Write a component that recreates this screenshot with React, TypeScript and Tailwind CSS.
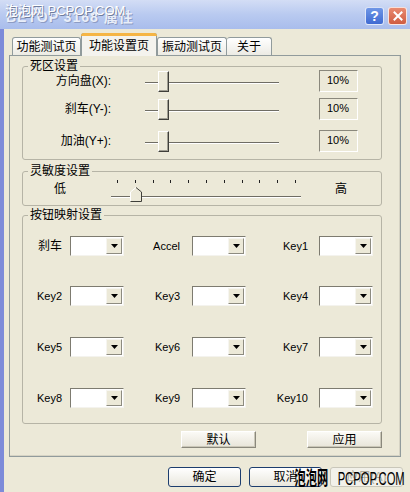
import React from "react";

const FONT = "font-['Liberation_Sans','Noto_Sans_CJK_SC',sans-serif]";

function SliderThumb() {
  return (
    <div className="absolute left-[13px] top-[1px] h-[21px] w-[11px] border border-t-white border-l-white border-r-[#3f3f3a] border-b-[#3f3f3a] bg-[#ece9d8] shadow-[inset_-1px_-1px_0_#a09e92]" />
  );
}

function DeadZoneRow({ label, className }: { label: string; className: string }) {
  return (
    <div className={`flex h-[22px] items-center ${className}`}>
      <div className="w-[88px] text-right text-[12px] leading-[14px]">{label}</div>
      <div className="relative ml-[34px] h-[22px] w-[134px]">
        <div className="mt-[12px] h-[2px] border-t border-b border-t-[#6f6d64] border-b-white" />
        <SliderThumb />
      </div>
      <div className="ml-[40px] h-[22px] w-[39px] border border-t-[#8a887c] border-l-[#8a887c] border-b-white border-r-white pl-[7px] pt-[3px] text-[11px] leading-[13px]">
        10%
      </div>
    </div>
  );
}

function Combo() {
  return (
    <div className="flex h-[20px] w-[54px] border border-t-[#7d7b70] border-l-[#7d7b70] border-b-[#f4f3ee] border-r-[#f4f3ee] bg-white">
      <div className="flex-1" />
      <div className="m-[1px] flex w-[16px] items-center justify-center border border-t-[#f6f5f0] border-l-[#f6f5f0] border-b-[#8d8b80] border-r-[#8d8b80] bg-[#ece9d8]">
        <svg width="7" height="4" viewBox="0 0 7 4">
          <path d="M0 0h7L3.5 4z" fill="#000" />
        </svg>
      </div>
    </div>
  );
}

function MapLabel({ text, width }: { text: string; width: string }) {
  const latin = /^[A-Za-z]/.test(text);
  return (
    <div className={`${width} text-right ${latin ? "text-[11px]" : "text-[12px]"} leading-[14px]`}>
      {text}
    </div>
  );
}

function PanelButton({ children }: { children: React.ReactNode }) {
  return (
    <div className="flex h-[17px] w-[75px] items-center justify-center border border-t-white border-l-white border-r-[#8a887c] border-b-[#8a887c] bg-linear-to-b from-[#fbfaf6] to-[#e8e5d9] text-[12px] leading-[14px] shadow-[inset_-1px_-1px_0_#cac7b8]">
      {children}
    </div>
  );
}

function DialogButton({ children, disabled }: { children: React.ReactNode; disabled?: boolean }) {
  return (
    <div
      className={`flex h-[20px] w-[73px] items-center justify-center rounded-[3px] border text-[12px] leading-[14px] ${
        disabled
          ? "border-[#c9c7ba] bg-[#f2f1ea] text-[#aca899]"
          : "border-[#1c3d6e] bg-linear-to-b from-white to-[#e9e7dd] text-black"
      }`}
    >
      {children}
    </div>
  );
}

const mapRows = [
  ["刹车", "Accel", "Key1"],
  ["Key2", "Key3", "Key4"],
  ["Key5", "Key6", "Key7"],
  ["Key8", "Key9", "Key10"],
];
const mapRowGaps = ["mt-[15px]", "mt-[30px]", "mt-[31px]", "mt-[31px]"];

export default function App() {
  return (
    <div className={`relative flex h-[492px] w-[410px] flex-col overflow-hidden bg-[#ece9d8] text-black ${FONT}`}>
      {/* title bar */}
      <div className="relative flex h-[29px] shrink-0 items-start bg-linear-to-b from-[#d3ddf5] via-[#b9caf0] to-[#a9bdec]">
        <div className="ml-[6px] mt-[9px] text-[14px] font-bold leading-[16px] tracking-[1px] text-[#e9eef9] [text-shadow:1px_1px_0_#8d9cc4]">
          BETOP 3168 属性
        </div>
        <div className="absolute left-[5px] top-[4px] text-[13px] leading-[14px] text-white [text-shadow:1px_1px_0_#6f7c9c]">
          泡泡网 PCPOP.COM
        </div>
        <div className="ml-auto mr-[3px] mt-[7px] flex gap-[4px]">
          <div className="flex h-[18px] w-[19px] items-center justify-center rounded-[3px] border border-white/80 bg-linear-to-b from-[#6f96e6] to-[#3f6ad2] text-[14px] font-bold leading-[14px] text-white">
            ?
          </div>
          <div className="flex h-[18px] w-[19px] items-center justify-center rounded-[3px] border border-white/80 bg-linear-to-b from-[#e98a70] to-[#cf5c40]">
            <svg width="10" height="10" viewBox="0 0 10 10">
              <path d="M1.5 1.5l7 7M8.5 1.5l-7 7" stroke="#fff" strokeWidth="2" strokeLinecap="square" />
            </svg>
          </div>
        </div>
      </div>

      <div className="flex flex-1">
        {/* window frame edge */}
        <div className="w-[4px] bg-[#7d8bd9]" />

        <div className="flex flex-1 flex-col pl-[5px] pt-[4px]">
          {/* tabs */}
          <div className="relative z-10 flex h-[22px] items-end pl-[3px]">
            <div className="flex h-[18px] w-[69px] items-center justify-center rounded-t-[3px] border border-b-0 border-[#919b9c] bg-linear-to-b from-white to-[#ecebe4] text-[12px] leading-[14px]">
              功能测试页
            </div>
            <div className="-mb-px flex h-[23px] w-[76px] flex-col rounded-t-[3px] border border-b-0 border-[#919b9c] bg-[#f4f3ee]">
              <div className="-mx-px -mt-px h-[3px] rounded-t-[3px] bg-[#f5b545]" />
              <div className="flex flex-1 items-center justify-center text-[12px] leading-[14px]">功能设置页</div>
            </div>
            <div className="flex h-[18px] w-[70px] items-center justify-center rounded-t-[3px] border border-b-0 border-[#919b9c] bg-linear-to-b from-white to-[#ecebe4] text-[12px] leading-[14px]">
              振动测试页
            </div>
            <div className="flex h-[18px] w-[45px] items-center justify-center rounded-t-[3px] border border-b-0 border-l-0 border-[#919b9c] bg-linear-to-b from-white to-[#ecebe4] text-[12px] leading-[14px]">
              关于
            </div>
          </div>

          {/* tab page */}
          <div className="flex h-[402px] w-[392px] flex-col border border-[#919b9c] bg-[#ece9d8] shadow-[inset_-1px_-1px_0_#d6d3c4]">
            {/* dead zone */}
            <fieldset className="ml-[12px] mt-[4px] w-[360px] rounded-[3px] border border-[#b6b4a6] pb-[7px]">
              <legend className="ml-[5px] px-[2px] text-[12px] leading-[12px]">死区设置</legend>
              <DeadZoneRow label="方向盘(X):" className="-mt-[2px]" />
              <DeadZoneRow label="刹车(Y-):" className="mt-[6px]" />
              <DeadZoneRow label="加油(Y+):" className="mt-[10px]" />
            </fieldset>

            {/* sensitivity */}
            <fieldset className="ml-[12px] mt-[5px] w-[360px] rounded-[3px] border border-[#b6b4a6]">
              <legend className="ml-[5px] px-[2px] text-[12px] leading-[12px]">灵敏度设置</legend>
              <div className="flex h-[28px]">
                <div className="w-[88px] pl-[31px] pt-[5px] text-[12px] leading-[14px]">低</div>
                <div className="relative w-[190px]">
                  <div className="mt-[3px] flex h-[3px] justify-between pl-[6px] pr-[5px]">
                    {Array.from({ length: 11 }).map((_, i) => (
                      <div key={i} className="h-[3px] w-px bg-[#222]" />
                    ))}
                  </div>
                  <div className="mt-[13px] h-[2px] border-t border-b border-t-[#6f6d64] border-b-white" />
                  <svg className="absolute left-[19px] top-[10px]" width="12" height="15" viewBox="0 0 12 15">
                    <path d="M0.5 14.5V5L6 0.5L11.5 5V14.5Z" fill="#ece9d8" />
                    <path d="M0.5 14V5L6 0.5" fill="none" stroke="#ffffff" />
                    <path d="M6 0.5L11.5 5V14.5H0.5" fill="none" stroke="#3f3f3a" />
                  </svg>
                </div>
                <div className="ml-[34px] pt-[5px] text-[12px] leading-[14px]">高</div>
              </div>
            </fieldset>

            {/* button mapping */}
            <fieldset className="ml-[12px] mt-[3px] w-[360px] rounded-[3px] border border-[#b6b4a6] pb-[15px]">
              <legend className="ml-[5px] px-[2px] text-[12px] leading-[12px]">按钮映射设置</legend>
              {mapRows.map((row, r) => (
                <div key={r} className={`flex h-[20px] items-center ${mapRowGaps[r]}`}>
                  <MapLabel text={row[0]} width="w-[39px]" />
                  <div className="ml-[8px]">
                    <Combo />
                  </div>
                  <MapLabel text={row[1]} width="w-[56px]" />
                  <div className="ml-[12px]">
                    <Combo />
                  </div>
                  <MapLabel text={row[2]} width="w-[62px]" />
                  <div className="ml-[11px]">
                    <Combo />
                  </div>
                </div>
              ))}
            </fieldset>

            <div className="ml-[12px] mt-[7px] flex w-[360px] justify-end gap-[51px]">
              <PanelButton>默认</PanelButton>
              <PanelButton>应用</PanelButton>
            </div>
          </div>

          {/* dialog buttons */}
          <div className="mt-[10px] flex justify-end gap-[8px] pr-[7px]">
            <DialogButton>确定</DialogButton>
            <DialogButton>取消</DialogButton>
            <DialogButton disabled>应用(A)</DialogButton>
          </div>
        </div>
      </div>

      {/* site mark over the corner */}
      <div className="absolute bottom-[3px] right-[5px] flex origin-right scale-x-[0.59] items-baseline whitespace-nowrap text-[19px] leading-[20px] text-black">
        <span className="font-bold">泡泡网</span>
        <span className="ml-[16px]">PCPOP.COM</span>
      </div>
    </div>
  );
}
